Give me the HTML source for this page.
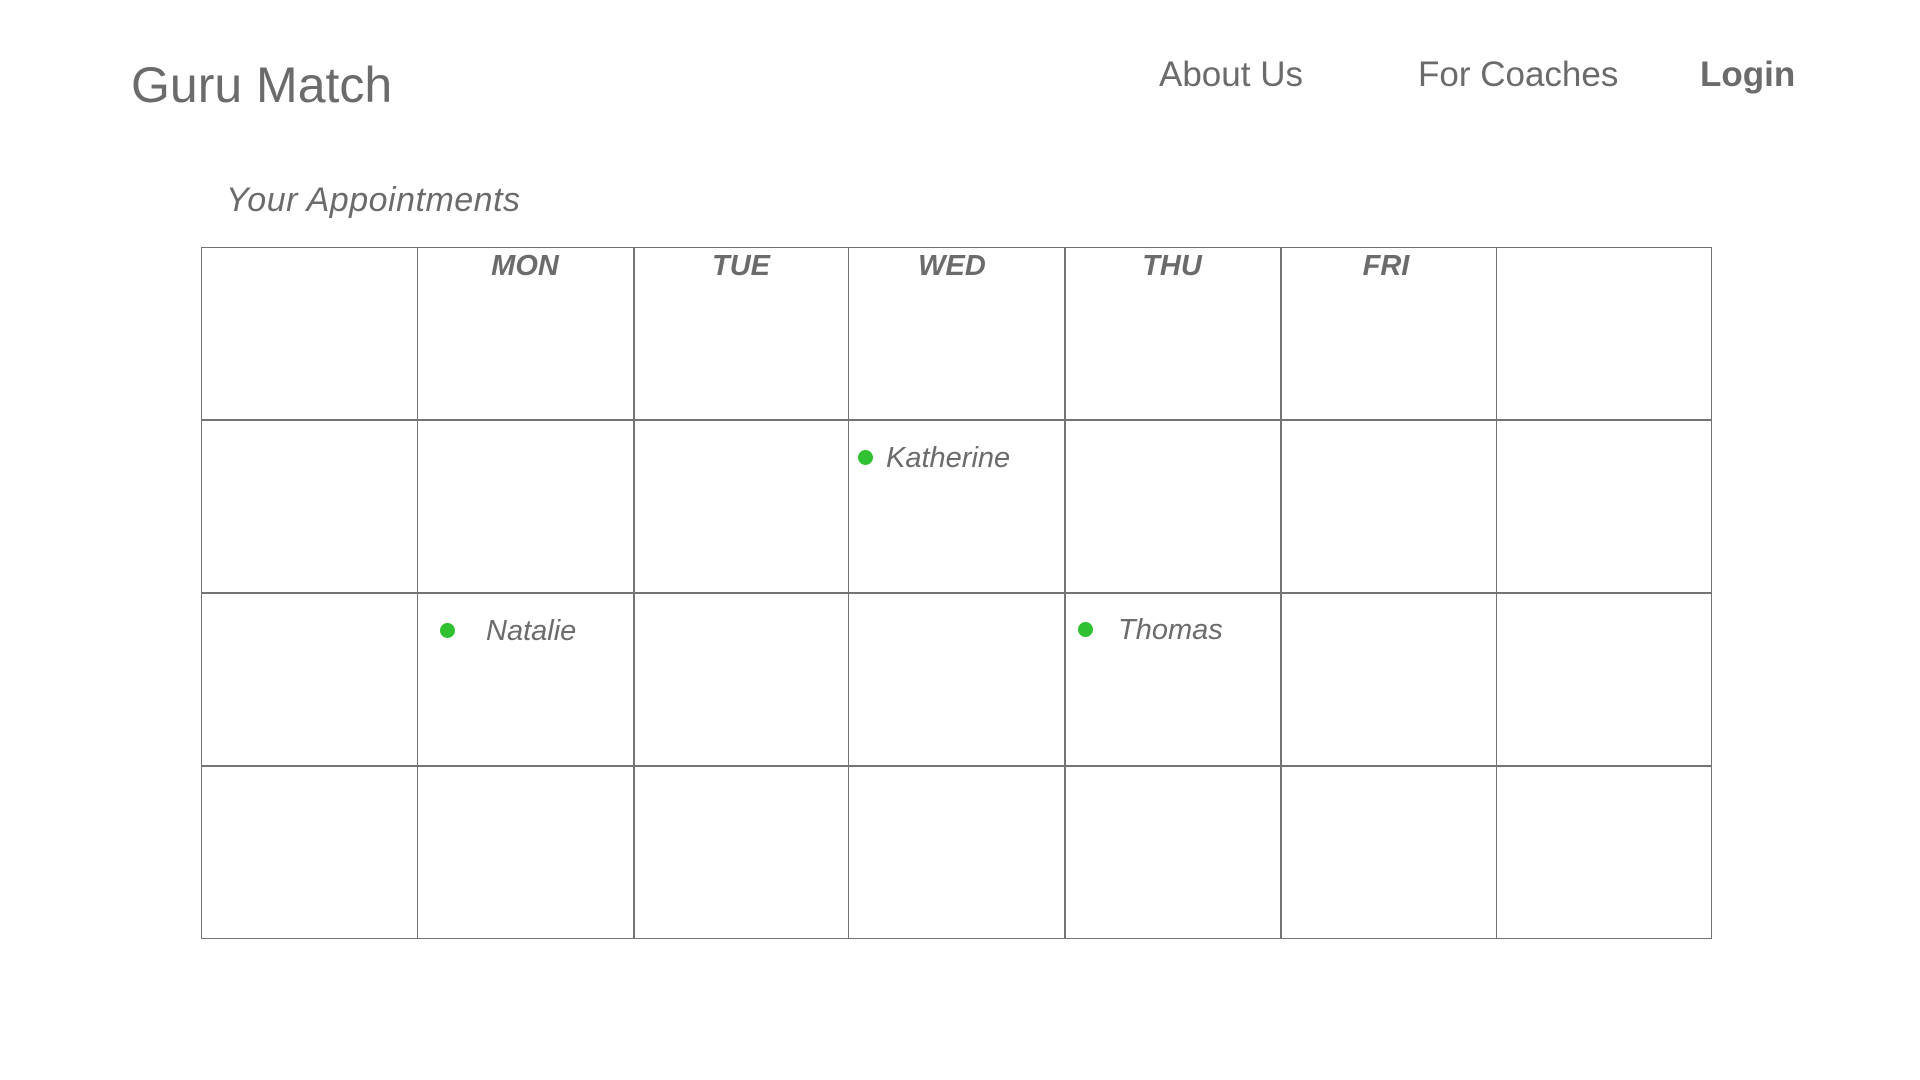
<!DOCTYPE html>
<html><head><meta charset="utf-8"><style>
html,body{margin:0;padding:0;background:#fff;width:1920px;height:1080px;overflow:hidden;font-family:"Liberation Sans",Arial,sans-serif;color:#6b6b6b}
.a{position:absolute;white-space:nowrap;line-height:1}
.h{position:absolute;background:#737373}
.d{position:absolute;width:15px;height:15px;border-radius:50%;background:#2fc12f}
.day{font-weight:bold;font-style:italic;font-size:29px;width:216px;text-align:center}
.n{font-style:italic;font-size:29px}
</style></head><body>
<div class="a" style="left:131px;top:60px;font-size:50px">Guru Match</div>
<div class="a" style="left:1159px;top:57px;font-size:35px">About Us</div>
<div class="a" style="left:1418px;top:57px;font-size:35px">For Coaches</div>
<div class="a" style="left:1700px;top:57px;font-size:35px;font-weight:bold">Login</div>
<div class="a" style="left:226px;top:183px;font-size:34px;font-style:italic;letter-spacing:0.5px">Your Appointments</div>

<div class="h" style="left:201px;top:247px;width:1511px;height:1px"></div>
<div class="h" style="left:201px;top:419px;width:1511px;height:2px"></div>
<div class="h" style="left:201px;top:592px;width:1511px;height:2px"></div>
<div class="h" style="left:201px;top:765px;width:1511px;height:2px"></div>
<div class="h" style="left:201px;top:938px;width:1511px;height:1px"></div>

<div class="h" style="left:201px;top:247px;width:1px;height:692px"></div>
<div class="h" style="left:417px;top:247px;width:1px;height:692px"></div>
<div class="h" style="left:633px;top:247px;width:2px;height:692px"></div>
<div class="h" style="left:848px;top:247px;width:1px;height:692px"></div>
<div class="h" style="left:1064px;top:247px;width:2px;height:692px"></div>
<div class="h" style="left:1280px;top:247px;width:2px;height:692px"></div>
<div class="h" style="left:1496px;top:247px;width:1px;height:692px"></div>
<div class="h" style="left:1711px;top:247px;width:1px;height:692px"></div>

<div class="a day" style="left:417px;top:252px">MON</div>
<div class="a day" style="left:633px;top:252px">TUE</div>
<div class="a day" style="left:844px;top:252px">WED</div>
<div class="a day" style="left:1064px;top:252px">THU</div>
<div class="a day" style="left:1278px;top:252px">FRI</div>

<div class="d" style="left:858px;top:450px"></div>
<div class="a n" style="left:886px;top:444px">Katherine</div>
<div class="d" style="left:440px;top:623px"></div>
<div class="a n" style="left:486px;top:617px">Natalie</div>
<div class="d" style="left:1078px;top:622px"></div>
<div class="a n" style="left:1118px;top:616px">Thomas</div>
</body></html>
